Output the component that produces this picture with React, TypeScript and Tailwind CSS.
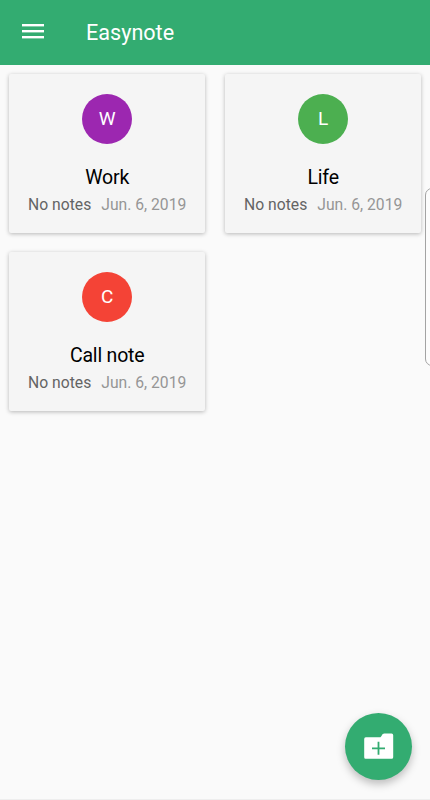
type Folder = {
  name: string;
  status: string;
  date: string;
  color: string;
};

const folders: Folder[] = [
  { name: "Work", status: "No notes", date: "Jun. 6, 2019", color: "bg-[#9c27b0]" },
  { name: "Life", status: "No notes", date: "Jun. 6, 2019", color: "bg-[#4caf50]" },
  { name: "Call note", status: "No notes", date: "Jun. 6, 2019", color: "bg-[#f44336]" },
];

function MenuIcon() {
  return (
    <svg width="22" height="17" viewBox="0 0 22 17" fill="currentColor" aria-hidden="true">
      <rect width="22" height="2.4" />
      <rect y="6" width="22" height="2.4" />
      <rect y="12" width="22" height="2.4" />
    </svg>
  );
}

function FolderPlusIcon() {
  return (
    <svg width="30" height="26" viewBox="0 0 30 26" className="-mt-px" aria-hidden="true">
      <path
        d="M2 4.2h14.4c1.6-.4 1.2-3.6 4-3.6h7.2a1.6 1.6 0 0 1 1.6 1.6v22a1.6 1.6 0 0 1-1.6 1.6H2A1.6 1.6 0 0 1 .2 24.2V5.9A1.7 1.7 0 0 1 2 4.2z"
        fill="#fff"
      />
      <path d="M14.5 8.8v13M8 15.3h13" stroke="#33ac71" strokeWidth="1.8" />
    </svg>
  );
}

function FolderCard({ folder }: { folder: Folder }) {
  return (
    <button
      type="button"
      className="flex h-[159px] flex-col items-center rounded-[2px] bg-[#f5f5f5] pt-[19.5px] shadow-[0_1px_4px_rgba(0,0,0,0.27)]"
    >
      <span
        className={`flex size-[50.5px] items-center justify-center rounded-full text-[19px] leading-none text-white ${folder.color}`}
      >
        {folder.name[0]}
      </span>
      <span className="mt-[20.5px] text-[19.5px] leading-[26px] tracking-[-0.01em] text-black">
        {folder.name}
      </span>
      <span className="mt-[3px] flex gap-[10px] text-[15.7px] leading-[22px] whitespace-nowrap">
        <span className="text-[#646464]">{folder.status}</span>
        <span className="text-[#969696]">{folder.date}</span>
      </span>
    </button>
  );
}

export default function App() {
  return (
    <div className="relative flex h-[800px] w-[430px] flex-col overflow-hidden border-b border-[#eeeeee] bg-[#fafafa] font-['Roboto',sans-serif]">
      <header className="flex h-[65px] shrink-0 items-center bg-[#33ac71] pl-[22px] text-white">
        <button type="button" aria-label="Menu">
          <MenuIcon />
        </button>
        <h1 className="ml-[42px] text-[21.6px] leading-7">Easynote</h1>
      </header>

      <main className="grid grid-cols-2 gap-x-[19.6px] gap-y-[19px] pt-[9px] pr-[8.6px] pl-[9px]">
        {folders.map((folder) => (
          <FolderCard key={folder.name} folder={folder} />
        ))}
      </main>

      {/* Edge panel handle */}
      <div className="absolute top-[188px] left-[425px] h-[178px] w-5 rounded-[7px] border border-[#a3a3a3] bg-[#fcfcfc]" />

      <button
        type="button"
        aria-label="New folder"
        className="absolute top-[713px] left-[345px] flex size-[67px] items-center justify-center rounded-full bg-[#33ac71] shadow-[0_4px_8px_rgba(0,0,0,0.25)]"
      >
        <FolderPlusIcon />
      </button>
    </div>
  );
}
